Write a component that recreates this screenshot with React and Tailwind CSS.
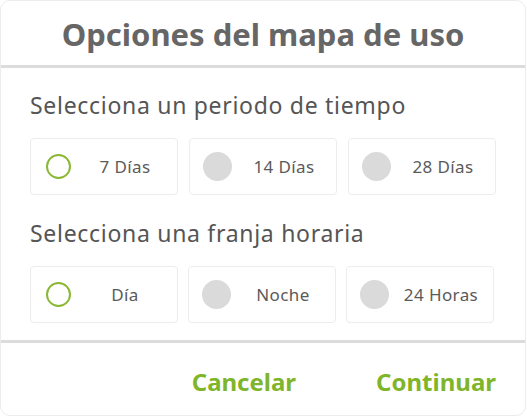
import React from "react";

const font = { fontFamily: '"Noto Sans", "Open Sans", sans-serif' };

function Option({ label, selected }) {
  return (
    <div className="flex h-[57px] w-[148px] items-center rounded-[4px] border border-[#ececec] bg-white pl-[13px]">
      <div className="flex h-[29px] w-[29px] shrink-0 items-center justify-center">
        {selected ? (
          <div className="h-[25px] w-[25px] rounded-full border-2 border-[#8ab833]" />
        ) : (
          <div className="h-[29px] w-[29px] rounded-full bg-[#dadada]" />
        )}
      </div>
      <div className="flex-1 text-center text-[17px] tracking-[0.4px] text-[#5a5a5a]">{label}</div>
    </div>
  );
}

export default function App() {
  return (
    <div className="h-[417px] w-[527px] bg-white" style={font}>
      <div className="flex h-[416px] w-[526px] flex-col overflow-hidden rounded-[10px] border border-[#ececec] bg-white">
        <div className="flex h-[64px] items-center justify-center pt-[3px] text-[31px] font-bold text-[#666666]">
          Opciones del mapa de uso
        </div>
        <div className="h-[3px] bg-[#dcdcdc]" />
        <div className="flex flex-col px-[29px]">
          <div className="mt-[22px] h-[30px] text-[23px] leading-[30px] tracking-[0.7px] text-[#555555]">Selecciona un periodo de tiempo</div>
          <div className="mt-[18px] flex gap-[11px]">
            <Option label="7 Días" selected />
            <Option label="14 Días" />
            <Option label="28 Días" />
          </div>
          <div className="mt-[23px] h-[30px] text-[23px] leading-[30px] tracking-[0.7px] text-[#555555]">Selecciona una franja horaria</div>
          <div className="mt-[18px] flex gap-[10px]">
            <Option label="Día" selected />
            <Option label="Noche" />
            <Option label="24 Horas" />
          </div>
        </div>
        <div className="mt-[17px] h-[3px] bg-[#dcdcdc]" />
        <div className="flex flex-1 items-center justify-end gap-[80px] pr-[29px] pt-[6px] text-[24px] font-bold text-[#7fb52a]">
          <span>Cancelar</span>
          <span>Continuar</span>
        </div>
      </div>
    </div>
  );
}
